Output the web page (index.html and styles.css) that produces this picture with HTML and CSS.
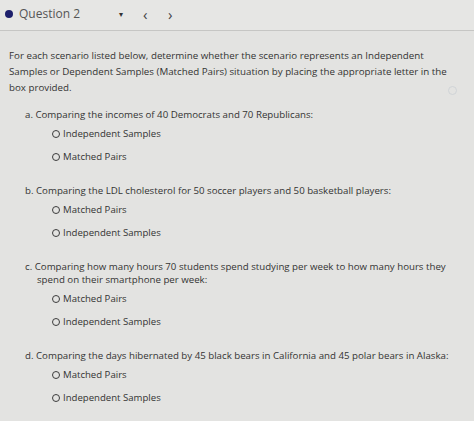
FILE: index.html
```html
<!DOCTYPE html>
<html>
<head>
<meta charset="utf-8">
<link rel="stylesheet" href="styles.css">
</head>
<body>
<div class="header">
  <span class="dot"></span>
  <span class="title">Question 2</span>
  <span class="caret">&#9662;</span>
  <span class="nav prev">&lsaquo;</span>
  <span class="nav">&rsaquo;</span>
</div>
<div class="content">
  <p class="intro">For each scenario listed below, determine whether the scenario represents an Independent<br>Samples or Dependent Samples (Matched Pairs) situation by placing the appropriate letter in the<br>box provided.</p>
  <span class="side-icon"></span>
  <div class="item">
    <div class="q">a. Comparing the incomes of 40 Democrats and 70 Republicans:</div>
    <div class="opt"><span class="radio"></span>Independent Samples</div>
    <div class="opt"><span class="radio"></span>Matched Pairs</div>
  </div>
  <div class="item">
    <div class="q">b. Comparing the LDL cholesterol for 50 soccer players and 50 basketball players:</div>
    <div class="opt"><span class="radio"></span>Matched Pairs</div>
    <div class="opt"><span class="radio"></span>Independent Samples</div>
  </div>
  <div class="item">
    <div class="q">c. Comparing how many hours 70 students spend studying per week to how many hours they<br>spend on their smartphone per week:</div>
    <div class="opt"><span class="radio"></span>Matched Pairs</div>
    <div class="opt"><span class="radio"></span>Independent Samples</div>
  </div>
  <div class="item">
    <div class="q">d. Comparing the days hibernated by 45 black bears in California and 45 polar bears in Alaska:</div>
    <div class="opt"><span class="radio"></span>Matched Pairs</div>
    <div class="opt"><span class="radio"></span>Independent Samples</div>
  </div>
</div>
</body>
</html>
```
FILE: styles.css
```css
html, body {
  margin: 0;
  padding: 0;
}
body {
  background: #e3e3e1;
  font-family: "Open Sans", "Liberation Sans", sans-serif;
  color: #333333;
  width: 474px;
  height: 421px;
  overflow: hidden;
}
.header {
  height: 31px;
  border-bottom: 1px solid #c6c6c4;
  display: flex;
  align-items: center;
  padding-left: 5px;
  padding-bottom: 3px;
  box-sizing: border-box;
  background: #e6e6e4;
}
.dot {
  width: 8px;
  height: 8px;
  border-radius: 50%;
  background: #1d1f6b;
  margin-right: 6px;
}
.title {
  font-size: 12px;
  color: #555;
  width: 100px;
}
.caret {
  font-size: 8px;
  color: #333;
  width: 24px;
}
.nav {
  font-size: 15px;
  color: #444;
  width: 23px;
}
.nav.prev {
  width: 25px;
}
.content {
  position: relative;
  padding: 0 9px;
}
.intro {
  margin: 17px 0 0 0;
  font-size: 9.75px;
  line-height: 16px;
  white-space: nowrap;
}
.side-icon {
  position: absolute;
  left: 448px;
  top: 38px;
  width: 7px;
  height: 7px;
  border-radius: 50%;
  border: 1px solid #d0d4d7;
}
.item {
  margin-left: 16px;
  padding-top: 12px;
  padding-bottom: 12px;
}
.item + .item {
  padding-top: 0;
}
.q {
  font-size: 9.7px;
  line-height: 13px;
  padding-left: 12px;
  text-indent: -12px;
  margin-bottom: 6px;
  white-space: nowrap;
}
.opt {
  font-size: 9.6px;
  line-height: 14px;
  display: flex;
  align-items: center;
  margin-left: 27px;
  margin-bottom: 8.5px;
}
.radio {
  width: 6px;
  height: 6px;
  border: 1.3px solid #3c3c3c;
  border-radius: 50%;
  margin-right: 3px;
  flex: none;
}
```
